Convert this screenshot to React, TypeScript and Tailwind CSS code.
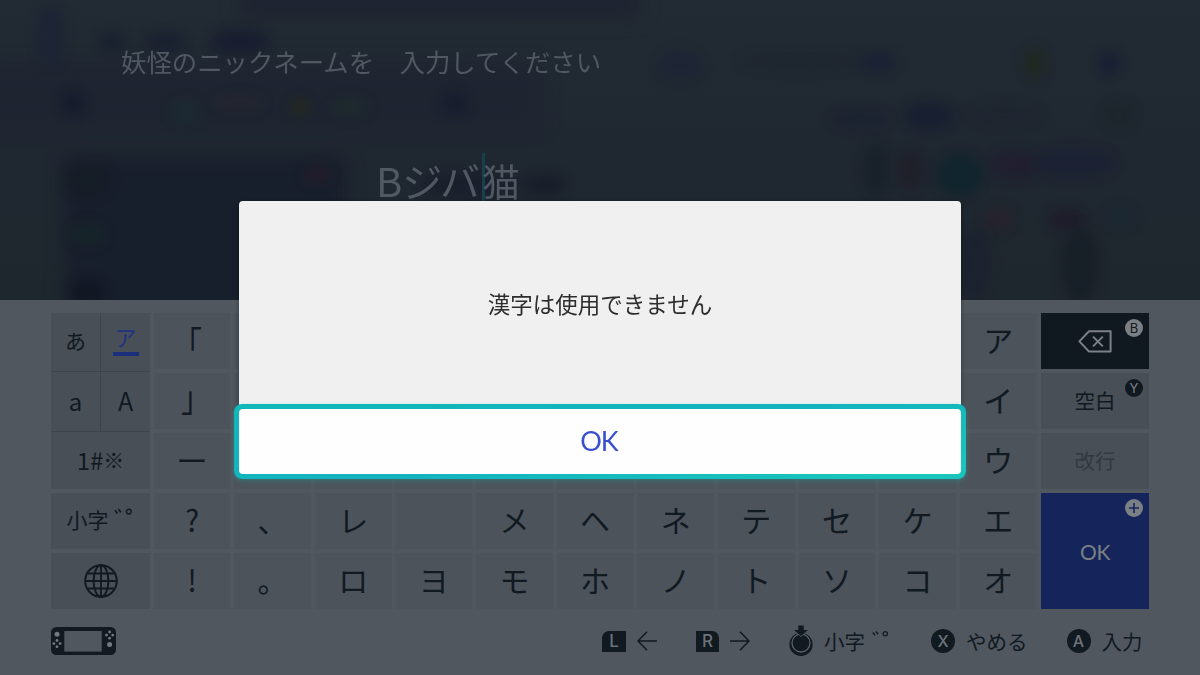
import type { ReactNode } from "react";
import clsx from "clsx";

const KANA_ROWS = [
  ["「", "", "", "", "", "", "", "", "", "", "ア"],
  ["」", "", "", "", "", "", "", "", "", "", "イ"],
  ["ー", "", "", "", "", "", "", "", "", "", "ウ"],
  ["?", "、", "レ", "", "メ", "ヘ", "ネ", "テ", "セ", "ケ", "エ"],
  ["!", "。", "ロ", "ヨ", "モ", "ホ", "ノ", "ト", "ソ", "コ", "オ"],
];

// brackets sit in a corner of their em box, so pull them back to the key's centre
const NUDGE: Record<string, string> = {
  "「": "-translate-x-[5px] translate-y-[3px] scale-y-[1.2]",
  "」": "translate-x-[4px] -translate-y-[3px] scale-y-[1.2]",
  "ー": "scale-x-105",
};

// cx, cy, rx, ry, fill
const BLOBS: [number, number, number, number, string][] = [
  [50, 35, 14, 30, "#1d2436"],
  [112, 42, 14, 8, "#181f30"],
  [165, 42, 20, 9, "#181f30"],
  [240, 42, 30, 12, "#171d30"],
  [73, 103, 12, 12, "#151b2c"],
  [455, 103, 13, 12, "#171d2f"],
  [185, 112, 14, 12, "#1c2b33"],
  [240, 103, 24, 8, "#252630"],
  [300, 107, 10, 9, "#26291f"],
  [350, 107, 18, 10, "#1e2b2e"],
  [88, 180, 22, 16, "#161d26"],
  [88, 234, 18, 12, "#17252a"],
  [318, 175, 14, 9, "#241d2b"],
  [545, 185, 20, 10, "#171e2a"],
  [470, 185, 50, 12, "#191f2c"],
  [88, 292, 18, 12, "#111722"],
  [680, 65, 22, 14, "#1e2536"],
  [800, 62, 60, 7, "#1e2630"],
  [878, 62, 17, 10, "#1a2135"],
  [1035, 63, 10, 15, "#20291f"],
  [1109, 63, 10, 11, "#171e36"],
  [860, 119, 30, 8, "#1b2232"],
  [929, 116, 24, 13, "#171e31"],
  [1005, 115, 35, 9, "#1e2630"],
  [1119, 115, 14, 12, "#1c262b"],
  [876, 170, 12, 26, "#182129"],
  [911, 170, 12, 20, "#211f2a"],
  [960, 175, 23, 21, "#10252d"],
  [1015, 165, 26, 14, "#221f30"],
  [1075, 163, 40, 14, "#1b2234"],
  [998, 219, 14, 12, "#28222b"],
  [1067, 220, 18, 10, "#201c2b"],
  [1120, 218, 14, 10, "#1b2832"],
  [1080, 265, 18, 38, "#171f27"],
  [975, 265, 14, 36, "#1b2230"],
];

function Backdrop() {
  return (
    <svg className="absolute inset-0" width="1200" height="300" viewBox="0 0 1200 300" aria-hidden>
      <defs>
        <linearGradient id="base" x1="0" y1="0" x2="0" y2="1">
          <stop offset="0" stopColor="#222b33" />
          <stop offset="0.5" stopColor="#1f2731" />
          <stop offset="1" stopColor="#1f272e" />
        </linearGradient>
        <filter id="soft" x="-100%" y="-100%" width="300%" height="300%" colorInterpolationFilters="sRGB">
          <feGaussianBlur stdDeviation="6" />
        </filter>
        <filter id="wide" x="-30%" y="-30%" width="160%" height="160%" colorInterpolationFilters="sRGB">
          <feGaussianBlur stdDeviation="9" />
        </filter>
      </defs>
      <rect width="1200" height="300" fill="url(#base)" />
      <g filter="url(#wide)">
        <rect x="240" y="-10" width="400" height="28" fill="#1e2431" />
        <rect x="-20" y="66" width="560" height="60" fill="#1e2531" />
        <rect x="65" y="158" width="280" height="170" fill="#181f2c" />
      </g>
      <g opacity="0.9">
        {BLOBS.map(([cx, cy, rx, ry, fill], i) => (
          <ellipse key={i} cx={cx} cy={cy} rx={rx} ry={ry} fill={fill} filter="url(#soft)" />
        ))}
      </g>
    </svg>
  );
}

function Badge({ children, className }: { children: ReactNode; className?: string }) {
  return (
    <span
      className={clsx(
        "absolute right-[6px] top-[6px] flex size-[18px] items-center justify-center rounded-full font-['Inter'] text-[13px] leading-none",
        className,
      )}
    >
      {children}
    </span>
  );
}

function Marks({ className }: { className?: string }) {
  return (
    <svg className={className} width="19" height="10" viewBox="0 0 19 10" fill="none" stroke="currentColor" strokeWidth="1.6">
      <path d="M1 2.2l2.4 3.2M4.4 1l2.4 3.2" />
      <circle cx="14.8" cy="3.6" r="2.4" strokeWidth="1.4" />
    </svg>
  );
}

function GlobeIcon() {
  return (
    <svg width="34" height="34" viewBox="0 0 34 34" fill="none" stroke="currentColor" strokeWidth="2">
      <circle cx="17" cy="17" r="15.8" />
      <ellipse cx="17" cy="17" rx="7.4" ry="15.8" />
      <path d="M17 1v32M1 17h32M4 9.5h26M4 24.5h26" strokeWidth="1.8" />
    </svg>
  );
}

function BackspaceIcon() {
  return (
    <svg width="34" height="23" viewBox="0 0 34 23" fill="none" stroke="currentColor" strokeWidth="2" strokeLinejoin="round">
      <path d="M11 1.2h21.6v20.4H11L1.4 11.4z" />
      <path d="M15 6.6l9.8 9.8M24.8 6.6L15 16.4" />
    </svg>
  );
}

function ConsoleIcon() {
  return (
    <svg width="65" height="28" viewBox="0 0 65 28">
      <rect width="65" height="28" rx="5.5" fill="#111921" />
      <rect x="13.3" y="4" width="37.4" height="20.6" fill="#50575f" />
      <g fill="#737980">
        <circle cx="6" cy="7.3" r="2.5" />
        <circle cx="58.6" cy="17.6" r="2.5" />
        <circle cx="6" cy="13.5" r="1.4" />
        <circle cx="6" cy="19.7" r="1.4" />
        <circle cx="2.9" cy="16.6" r="1.4" />
        <circle cx="9.1" cy="16.6" r="1.4" />
        <circle cx="58.6" cy="5" r="1.4" />
        <circle cx="58.6" cy="11.2" r="1.4" />
        <circle cx="55.5" cy="8.1" r="1.4" />
        <circle cx="61.7" cy="8.1" r="1.4" />
      </g>
    </svg>
  );
}

function StickIcon() {
  return (
    <svg width="24" height="32" viewBox="0 0 24 32">
      <circle cx="12" cy="19.4" r="11.6" fill="#111921" />
      <circle cx="12" cy="18" r="9" fill="#111921" stroke="#5a6169" strokeWidth="1.3" />
      <path d="M9.3 0.5h5.4v4.6h4.3L12 11 5 5.1h4.3z" fill="#111921" stroke="#50575f" strokeWidth="1.6" paintOrder="stroke" />
    </svg>
  );
}

function Arrow({ flip }: { flip?: boolean }) {
  return (
    <svg className={clsx(flip && "-scale-x-100")} width="20" height="20" viewBox="0 0 20 20" fill="none" stroke="currentColor" strokeWidth="1.6">
      <path d="M10 0.8L1 10l9 9.2M1 10h19" />
    </svg>
  );
}

function ModeKeys() {
  return (
    <div className="flex w-[99px] flex-col text-[21px]">
      <div className="grid h-[176px] grid-cols-2 grid-rows-[58px_59px_57px] gap-px bg-[#3d444c]">
        <div className="flex items-center justify-center bg-[#484f57] pb-0.5">あ</div>
        <div className="flex flex-col items-center bg-[#484f57] pt-[11px] leading-[24px] text-[#1f3283]">
          <span className="text-[22px]">ア</span>
          <span className="mt-[4px] h-[4px] w-[26px] bg-[#1c2f7d]" />
        </div>
        <div className="flex items-center justify-center bg-[#484f57] pb-0.5 text-[24px]">a</div>
        <div className="flex items-center justify-center bg-[#484f57] pb-0.5 text-[25px]">A</div>
        <div className="col-span-2 flex items-center justify-center bg-[#484f57] pb-0.5">
          <span className="text-[24px]">1#</span>
          <span>※</span>
        </div>
      </div>
      <div className="mt-1 flex h-[56px] items-center justify-center bg-[#484f57] pb-0.5 pr-0.5">
        小字
        <Marks className="-mt-3.5 ml-[5px]" />
      </div>
      <div className="mt-1 flex h-[56px] items-center justify-center bg-[#484f57]">
        <GlobeIcon />
      </div>
    </div>
  );
}

function ActionKeys() {
  return (
    <div className="flex w-[108px] flex-col gap-1 text-[20.5px]">
      <div className="relative flex h-[56px] items-center justify-center bg-[#111920] text-[#7b8085]">
        <BackspaceIcon />
        <Badge className="bg-[#7b8085] text-[#111920]">B</Badge>
      </div>
      <div className="relative flex h-[56px] items-center justify-center bg-[#484f57] pb-0.5">
        空白
        <Badge className="bg-[#111920] text-[#7b8085]">Y</Badge>
      </div>
      <div className="flex h-[56px] items-center justify-center bg-[#484f57] pb-0.5 text-[#32393f]">改行</div>
      <div className="relative flex h-[116px] items-center justify-center bg-[#15255c] font-['Lato'] text-[21px] tracking-[-0.5px] text-[#7b8085]">
        <span className="pt-0.5">OK</span>
        <Badge className="bg-[#7b8085] text-[#15255c]">
          <svg width="10" height="10" viewBox="0 0 10 10" stroke="currentColor" strokeWidth="1.6">
            <path d="M5 0v10M0 5h10" />
          </svg>
        </Badge>
      </div>
    </div>
  );
}

function RoundButton({ children }: { children: ReactNode }) {
  return (
    <span className="flex size-[24px] items-center justify-center rounded-full bg-[#111921] font-['Inter'] text-[16px] leading-none font-medium text-[#6d737a]">
      {children}
    </span>
  );
}

function Footer() {
  return (
    <div className="flex h-[30px] items-center pt-0.5 text-[20.5px]">
      <ConsoleIcon />
      <div className="ml-[486px] flex items-center">
        <span className="flex h-[21px] w-[24px] items-center justify-center rounded-tl-[7px] bg-[#111921] font-['Inter'] text-[17px] leading-none font-medium text-[#6d737a]">
          L
        </span>
        <span className="ml-[11px]">
          <Arrow />
        </span>
      </div>
      <div className="ml-[39px] flex items-center">
        <span className="flex h-[21px] w-[23px] items-center justify-center rounded-tr-[7px] bg-[#111921] font-['Inter'] text-[17px] leading-none font-medium text-[#6d737a]">
          R
        </span>
        <span className="ml-[11px]">
          <Arrow flip />
        </span>
      </div>
      <div className="ml-[39px] flex items-center">
        <StickIcon />
        <span className="ml-[11px] leading-none">小字</span>
        <Marks className="-mt-3 ml-[6px] scale-90" />
      </div>
      <div className="ml-[41px] flex items-center">
        <RoundButton>X</RoundButton>
        <span className="ml-[11px] leading-none">やめる</span>
      </div>
      <div className="ml-[39px] flex items-center">
        <RoundButton>A</RoundButton>
        <span className="ml-[11px] leading-none">入力</span>
      </div>
    </div>
  );
}

function Dialog() {
  return (
    <div className="absolute left-[239px] top-[201px] flex h-[274px] w-[722px] flex-col rounded-[4px] bg-[#f0f0f0] shadow-[0_1px_4px_rgba(0,0,0,0.35)]">
      <div className="flex h-[203px] shrink-0 items-center justify-center pt-[3px] text-[22.5px] text-[#2d2d2d]">漢字は使用できません</div>
      <button className="-mx-[5px] flex h-[75px] shrink-0 items-center justify-center rounded-[8px] bg-[linear-gradient(170deg,#10b8b9,#13b3be_50%,#18c4bb_90%)] p-[5px] shadow-[0_2px_5px_rgba(20,190,180,0.3)]">
        <span className="flex size-full items-center justify-center rounded-[4px] bg-[#fefefe] pr-0.5 font-['Lato'] text-[27px] tracking-[-1px] text-[#3850d0]">
          OK
        </span>
      </button>
    </div>
  );
}

export default function App() {
  return (
    <div className="relative flex h-[675px] w-[1200px] flex-col overflow-hidden bg-[#50575f] font-['Noto_Sans_CJK_JP',sans-serif] text-[#111921]">
      <div className="relative h-[300px] shrink-0 text-[#505862]">
        <Backdrop />
        <div className="relative pl-[121px] pt-[42px]">
          <h1 className="text-[25.4px] leading-[38px] whitespace-pre">妖怪のニックネームを　入力してください</h1>
          <div className="mt-[73px] flex items-start pl-[255px] text-[40px] leading-[54px]">
            <span>Bジバ</span>
            <span className="-mr-[3px] ml-[2px] h-[56px] w-[3px] bg-[#183f4b]" />
            <span className="text-[38px]">猫</span>
          </div>
        </div>
      </div>
      <main className="px-[51px] pt-[13px]">
        <div className="flex h-[296px]">
          <ModeKeys />
          <div className="ml-[3.6px] grid w-[883px] grid-cols-11 grid-rows-5 gap-x-[3.8px] gap-y-1">
            {KANA_ROWS.flat().map((kana, i) => (
              <div key={i} className="flex items-center justify-center bg-[#4c535b] pb-1 text-[30px] leading-none">
                <span className={NUDGE[kana]}>{kana}</span>
              </div>
            ))}
          </div>
          <div className="ml-[4.4px]">
            <ActionKeys />
          </div>
        </div>
        <div className="mt-[16px]">
          <Footer />
        </div>
      </main>
      <Dialog />
    </div>
  );
}
